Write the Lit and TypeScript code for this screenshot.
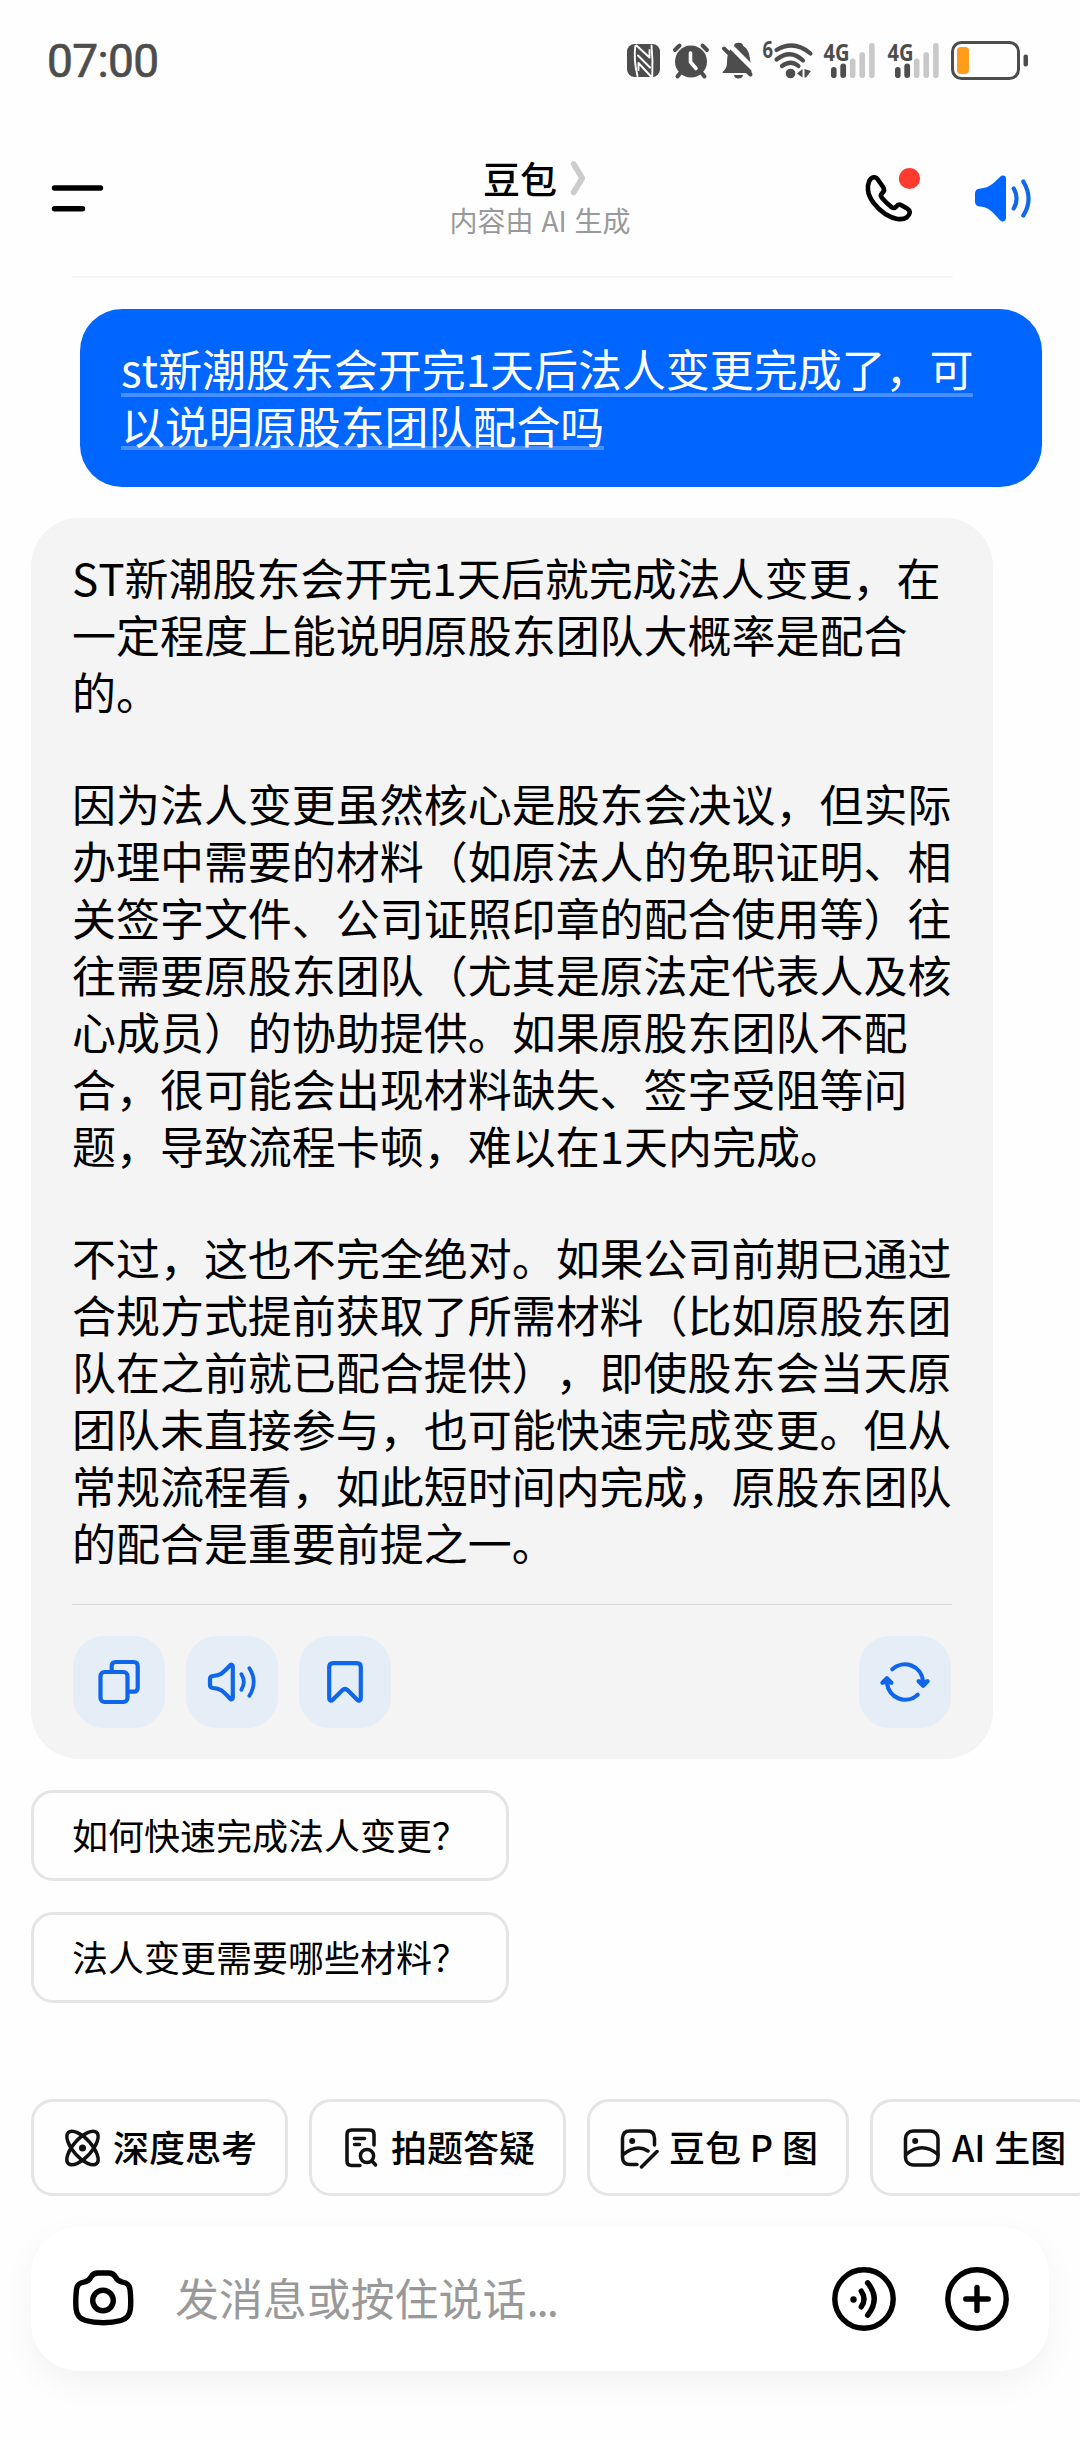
import { LitElement, html, svg, css } from "lit";
import { customElement } from "lit/decorators.js";

const PARAGRAPHS: string[][] = [
  ["ST新潮股东会开完1天后就完成法人变更，在", "一定程度上能说明原股东团队大概率是配合", "的。"],
  [
    "因为法人变更虽然核心是股东会决议，但实际",
    "办理中需要的材料（如原法人的免职证明、相",
    "关签字文件、公司证照印章的配合使用等）往",
    "往需要原股东团队（尤其是原法定代表人及核",
    "心成员）的协助提供。如果原股东团队不配",
    "合，很可能会出现材料缺失、签字受阻等问",
    "题，导致流程卡顿，难以在1天内完成。",
  ],
  [
    "不过，这也不完全绝对。如果公司前期已通过",
    "合规方式提前获取了所需材料（比如原股东团",
    "队在之前就已配合提供），即使股东会当天原",
    "团队未直接参与，也可能快速完成变更。但从",
    "常规流程看，如此短时间内完成，原股东团队",
    "的配合是重要前提之一。",
  ],
];

const SUGGESTIONS = ["如何快速完成法人变更？", "法人变更需要哪些材料？"];

const icons = {
  copy: svg`<rect x="27.5" y="36" width="27" height="30" rx="4"/><path d="M38.7 35V30q0-4 4-4h18q4 0 4 4v21.700q0 4-4 4H55.500"/>`,
  speak: svg`<path d="M24 43c0-1.800 1-2.800 3-3 7-.5 9-2 17.200-10.700 1.200-1.200 2.600-.5 2.600 1.200v31c0 1.700-1.400 2.400-2.600 1.200C36 54 34 52.500 27 52c-2-.2-3-1.200-3-3z"/><path d="M55.400 38.200q4.800 7.800 0 15.600M63.400 32.200q8.600 13.800 0 27.600" stroke-width="3.800"/>`,
  bookmark: svg`<path d="M30.200 31.200q0-4 4-4h23.600q4 0 4 4v31.400c0 2-2 2.600-3.300 1.300l-9.800-9.700q-2.700-2.300-5.400 0l-9.800 9.700c-1.300 1.300-3.300.7-3.300-1.300z"/>`,
  refresh: svg`<path d="M33.300 33.300A18.300 18.300 0 0 1 64 45M58.700 58.700A18.300 18.300 0 0 1 28 47"/><path d="M59.600 45.200l4.500 4.500 4.500-4.500-4.500 1zM32.400 46.800l-4.500-4.500-4.500 4.500 4.500-1z"/>`,
};

const chipIcons = {
  think: svg`<g transform="translate(20.500 21)"><ellipse rx="21" ry="9.200" transform="rotate(48)"/><ellipse rx="21" ry="9.200" transform="rotate(-48)"/><circle r="3.500" class="dot"/></g>`,
  question: svg`<path d="M20 38.500H11.500q-4.500 0-4.500-4.500V7.500Q7 3 11.500 3h18Q34 3 34 7.500V18M14.500 11.500h10M14.500 17.500h5"/><circle cx="27" cy="29" r="6.600"/><path d="M32 34l3.600 4"/>`,
  edit: svg`<path d="M19 37.500H12q-7.500 0-7.500-7.500V11.500Q4.500 4 12 4h17q7.500 0 7.500 7.500V18M5 27.500q14-11 25-3.500M23.500 40L39 24.500"/><circle cx="14.200" cy="14" r="3" class="dot"/>`,
  image: svg`<rect x="4.500" y="4" width="32.500" height="34" rx="7.500"/><path d="M5 27.500q16-13.500 32 0"/><circle cx="14.200" cy="14" r="3" class="dot"/>`,
};

const CHIPS = [
  { icon: chipIcons.think, label: "深度思考", wide: false },
  { icon: chipIcons.question, label: "拍题答疑", wide: false },
  { icon: chipIcons.edit, label: "豆包 P 图", wide: true },
  { icon: chipIcons.image, label: "AI 生图", wide: true },
];

@customElement("status-bar")
class StatusBar extends LitElement {
  static styles = css`
    :host { display: flex; justify-content: space-between; align-items: flex-start; height: 120px; padding: 0 51px 0 47px; box-sizing: border-box; }
    .time { font: 400 46px/54px Roboto, sans-serif; letter-spacing: -0.6px; color: #4d4d4d; padding-top: 34px; -webkit-text-stroke: 0.7px #4d4d4d; }
    .icons { display: flex; padding-top: 31px; fill: #4d4d4d; }
    .icons svg { display: block; height: 60px; overflow: visible; }
    .net { font: 700 22.5px "Open Sans", "Noto Sans", sans-serif; }
    .off { fill: #c9c9c9; }
    .line { fill: none; stroke: #4d4d4d; stroke-linecap: round; }
    .cut { fill: none; stroke: #fff; stroke-linecap: round; stroke-linejoin: round; }
  `;

  private signal() {
    return html`<svg width="64" viewBox="820 31 64 60">
      <text x="823.500" y="60.500" class="net" textLength="26" lengthAdjust="spacingAndGlyphs">4G</text>
      <rect x="831" y="67" width="5.600" height="11" rx="2.800"/>
      <rect x="840.300" y="63.500" width="5.800" height="14.500" rx="2.900"/>
      <g class="off">
        <rect x="849.900" y="58.500" width="5.600" height="19.500" rx="2.800"/>
        <rect x="859.400" y="52" width="5.600" height="26" rx="2.800"/>
        <rect x="869.100" y="43" width="5.600" height="35" rx="2.800"/>
      </g>
    </svg>`;
  }

  render() {
    return html`
      <div class="time">07:00</div>
      <div class="icons">
        <svg width="43" viewBox="625 31 43 60">
          <rect x="627" y="44" width="33" height="33" rx="7.500"/>
          <path class="cut" stroke-width="1.900" d="M637.500 76Q633.500 60 635.300 46M651.500 45.500Q653 60 652.300 76M636.500 45.500L649.500 57.500V50M651 76.500L638.500 63v7M638 55.500l12 12"/>
        </svg>
        <svg width="49" viewBox="668 31 49 60">
          <circle cx="691" cy="61.500" r="16"/>
          <path class="line" stroke-width="4" d="M675 50l4.500-4.500M707 50l-4.500-4.500M681 72l-3.500 4.500M701 72l3.500 4.500"/>
          <path class="cut" stroke-width="3.600" d="M690.500 53v9l5.500 6.500"/>
        </svg>
        <svg width="43" viewBox="717 31 43 60">
          <path d="M722.500 73q0-1.500 1.500-2.500 3-3 3-8 0-13 7-16.500 0-3.200 4.500-3.200t4.500 3q6 3.500 7 13l1.500 11v3.200zM734 75h9q-.5 3.500-4.500 3.500t-4.500-3.500z"/>
          <path class="cut" stroke-width="5" d="M728 43.500l27 27"/>
          <path class="line" stroke-width="4" d="M724 48.500l26.500 26"/>
        </svg>
        <svg width="60" viewBox="760 31 60 60">
          <text x="762.500" y="58" class="net" textLength="10.500" lengthAdjust="spacingAndGlyphs">6</text>
          <path class="line" stroke-width="4.200" d="M776.500 50q17.500-10.500 34 3.500M776.500 59.500q14-11 26.500 1M782 66q9-6.500 16.500 0"/>
          <circle cx="790.500" cy="73.500" r="4.800"/>
          <path d="M802.500 69v8.500l-5.500-4zM804.500 69l6.500 2-5 6.500h-1.500z"/>
        </svg>
        ${this.signal()}${this.signal()}
        <svg width="81" viewBox="948 31 81 60">
          <rect x="952.500" y="42.500" width="66" height="36" rx="9" class="line" stroke-width="3"/>
          <rect x="957" y="47" width="12" height="27" rx="4" fill="#ff9c1a"/>
          <rect x="1023.500" y="54.500" width="4.500" height="12" rx="2"/>
        </svg>
      </div>`;
  }
}

@customElement("chat-header")
class ChatHeader extends LitElement {
  static styles = css`
    :host { display: block; height: 158px; }
    .row { display: grid; grid-template-columns: 400px 280px 1fr; height: 156px; }
    .menu { padding: 62px 0 0 50px; }
    .mid { display: flex; flex-direction: column; align-items: center; padding-top: 32px; }
    .name { display: flex; align-items: center; gap: 13px; height: 52px; padding-right: 10px; font-size: 37px; font-weight: 500; line-height: 52px; color: #000; }
    .sub { font-size: 28px; line-height: 36px; margin-top: -2px; color: #999; white-space: nowrap; word-spacing: 1.5px; }
    .tools { display: flex; gap: 33px; padding: 46px 0 0 182px; }
    svg { display: block; fill: none; stroke-linecap: round; stroke-linejoin: round; }
    .rule { height: 2px; margin: 0 127px 0 72px; background: #f4f4f4; border-radius: 2px; }
  `;

  render() {
    return html`
      <div class="row">
        <div class="menu">
          <svg width="56" height="34" viewBox="50 182 56 34" stroke="#000" stroke-width="5.400"><path d="M54.500 188h46M54.500 208.800h28"/></svg>
        </div>
        <div class="mid">
          <div class="name">豆包
            <svg width="17" height="38" viewBox="571 161 17 38" stroke="#ccc" stroke-width="5.800"><path d="M574.700 166l8.500 14.300-8.500 14"/></svg>
          </div>
          <div class="sub">内容由 AI 生成</div>
        </div>
        <div class="tools">
          <svg width="78" height="60" viewBox="862 166 78 60">
            <path stroke="#000" stroke-width="4.600" d="M869.300 181c2.300-4.800 6.500-4.800 8.700-1.300l5.200 7.500c1.700 2.500.8 4.200-1 5.900-1.800 1.700-1.800 3-.2 4.800 3.200 4 6.300 6.700 9.800 9.500 1.600 1 2.900.8 4.200-.5 2-2.600 3.500-2.700 5.500-1.600l6 3.500c3.500 2.300 2.500 6-.8 8.500-4.700 3.400-13 2-21-3-9.500-6.500-17-16-17.700-24.300-.3-3.400.2-6.700 1.300-9z"/>
            <circle cx="909.500" cy="178.500" r="10.600" fill="#ff3b30"/>
          </svg>
          <svg width="62" height="60" viewBox="973 166 62 60">
            <path fill="#06f" d="M975 194.500c0-4 1.500-5.700 5.500-6 8-.7 12-4 19.500-11.500 2.500-2.500 6-1.500 6 1.800v39c0 4-4 5-6.500 2-7.500-8.500-11-12.500-19-13.200-4-.3-5.500-2-5.500-5.600z"/>
            <path stroke="#1068ea" stroke-width="4.200" d="M1013.700 188.500q5.800 10 0 20M1023.300 181.500q10.500 17.500 0 34"/>
          </svg>
        </div>
      </div>
      <div class="rule"></div>`;
  }
}

@customElement("message-list")
class MessageList extends LitElement {
  static styles = css`
    :host { display: flex; flex-direction: column; padding: 31px 0 0 31px; }
    .line { display: block; white-space: nowrap; width: max-content; }
    .user { margin-left: 49px; width: 962px; height: 178px; box-sizing: border-box; padding: 31px 41px; border-radius: 42px; background: #06f; color: #fff; font-size: 43.950px; line-height: 57px; }
    .mark { background: linear-gradient(#478fff, #478fff) 0 53px / 100% 4px no-repeat; }
    .mark.last { background-position-y: 49px; }
    .reply { width: 962px; height: 1241px; margin-top: 31px; box-sizing: border-box; padding: 31px 41px; border-radius: 48px; background: #f4f4f4; font-size: 43.980px; line-height: 57px; color: #000; }
    .para + .para { margin-top: 55px; }
    .actions { display: flex; gap: 21px; margin-top: 33px; padding: 31px 1px 0; border-top: 1px solid #d9d9d9; }
    .action { width: 92px; height: 92px; border-radius: 31px; background: #e5edf7; }
    .action:last-child { margin-left: auto; }
    .action svg { display: block; fill: none; stroke: #0f66ea; stroke-width: 4.200; stroke-linecap: round; stroke-linejoin: round; }
    .hint { box-sizing: border-box; width: 478px; height: 91px; margin-top: 31px; padding-left: 38px; border: 3px solid #e5e5e5; border-radius: 22px; font-size: 36px; line-height: 83px; white-space: nowrap; color: #000; }
  `;

  render() {
    return html`
      <div class="user">
        <span class="line mark">st新潮股东会开完1天后法人变更完成了，可</span>
        <span class="line mark last">以说明原股东团队配合吗</span>
      </div>
      <div class="reply">
        ${PARAGRAPHS.map((p) => html`<div class="para">${p.map((l) => html`<span class="line">${l}</span>`)}</div>`)}
        <div class="actions">
          ${[icons.copy, icons.speak, icons.bookmark, icons.refresh].map(
            (i) => html`<div class="action"><svg width="92" height="92" viewBox="0 0 92 92">${i}</svg></div>`
          )}
        </div>
      </div>
      ${SUGGESTIONS.map((s) => html`<div class="hint">${s}</div>`)}`;
  }
}

@customElement("chat-composer")
class ChatComposer extends LitElement {
  static styles = css`
    :host { display: block; padding: 0 31px; }
    .chips { display: flex; gap: 21px; margin-right: -31px; overflow: hidden; }
    .chip { display: flex; flex: none; align-items: center; gap: 9px; height: 97px; box-sizing: border-box; padding: 0 28px; border: 3px solid #e5e5e5; border-radius: 22px; font-size: 36px; font-weight: 500; color: #000; white-space: nowrap; }
    .chip svg { display: block; fill: none; stroke: #111; stroke-width: 3.500; stroke-linecap: round; stroke-linejoin: round; }
    .chip .dot { fill: #111; stroke: none; }
    .chip span { padding-bottom: 3px; }
    .wide { word-spacing: 0.7px; }
    .bar { display: flex; align-items: center; height: 144px; width: 1018px; margin-top: 31px; box-sizing: border-box; padding: 0 38px 0 41px; border-radius: 48px; background: #fff; box-shadow: 0 12px 32px rgba(0, 0, 0, 0.05); }
    .field { flex: 1; padding: 0 0 5px 41px; font-size: 43.930px; line-height: 60px; color: #999; white-space: nowrap; }
    .dots { letter-spacing: -2px; }
    .bar svg { display: block; fill: none; stroke: #000; stroke-width: 5.400; stroke-linecap: round; stroke-linejoin: round; }
    .bar svg + svg { margin-left: 45px; }
    .bar .solid { fill: #000; stroke: none; }
  `;

  render() {
    return html`
      <div class="chips">
        ${CHIPS.map(
          (c) => html`<div class="chip"><svg width="42" height="42" viewBox="0 0 42 42">${c.icon}</svg><span class=${c.wide ? "wide" : ""}>${c.label}</span></div>`
        )}
      </div>
      <div class="bar">
        <svg width="62" height="62" viewBox="0 0 62 62">
          <path d="M26 5h10.500c3.800 0 5.500 1.200 7 4 1.700 3.200 3.200 4.600 7 5.200 4.600.7 6.800 2.300 7.500 7.300.8 6.500 1 13 .4 19.500-.6 6.300-3.500 9.800-9.400 11.500-10.500 3-25 3-35.500 0-5.900-1.700-8.800-5.200-9.400-11.500-.6-6.500-.4-13 .4-19.500.7-5 2.900-6.600 7.500-7.300 3.800-.6 5.300-2 7-5.200 1.500-2.800 3.200-4 7-4z"/>
          <circle cx="31" cy="32.500" r="10.300"/>
        </svg>
        <div class="field">发消息或按住说话<span class="dots">...</span></div>
        <svg width="68" height="68" viewBox="830 2265 68 68">
          <circle cx="864" cy="2299" r="29.200"/>
          <circle cx="853.500" cy="2299.500" r="3.200" class="solid"/>
          <path d="M861.300 2291.200q5.500 7.800 0 15.600M867.600 2282.800q13.200 16.200 0 32.400"/>
        </svg>
        <svg width="68" height="68" viewBox="943 2265 68 68">
          <circle cx="977" cy="2299" r="29.200"/>
          <path d="M965.800 2299h22.400M977 2287.500v23"/>
        </svg>
      </div>`;
  }
}

@customElement("app-root")
class AppRoot extends LitElement {
  static styles = css`
    :host { display: flex; flex-direction: column; width: 1080px; height: 2440px; overflow: hidden; background: #fefefe; font-family: "Noto Sans CJK SC", sans-serif; text-spacing-trim: space-all; font-kerning: none; }
    chat-composer { margin-top: 96px; }
  `;

  render() {
    return html`
      <status-bar></status-bar>
      <chat-header lang="zh-CN"></chat-header>
      <message-list lang="zh-CN"></message-list>
      <chat-composer lang="zh-CN"></chat-composer>`;
  }
}
